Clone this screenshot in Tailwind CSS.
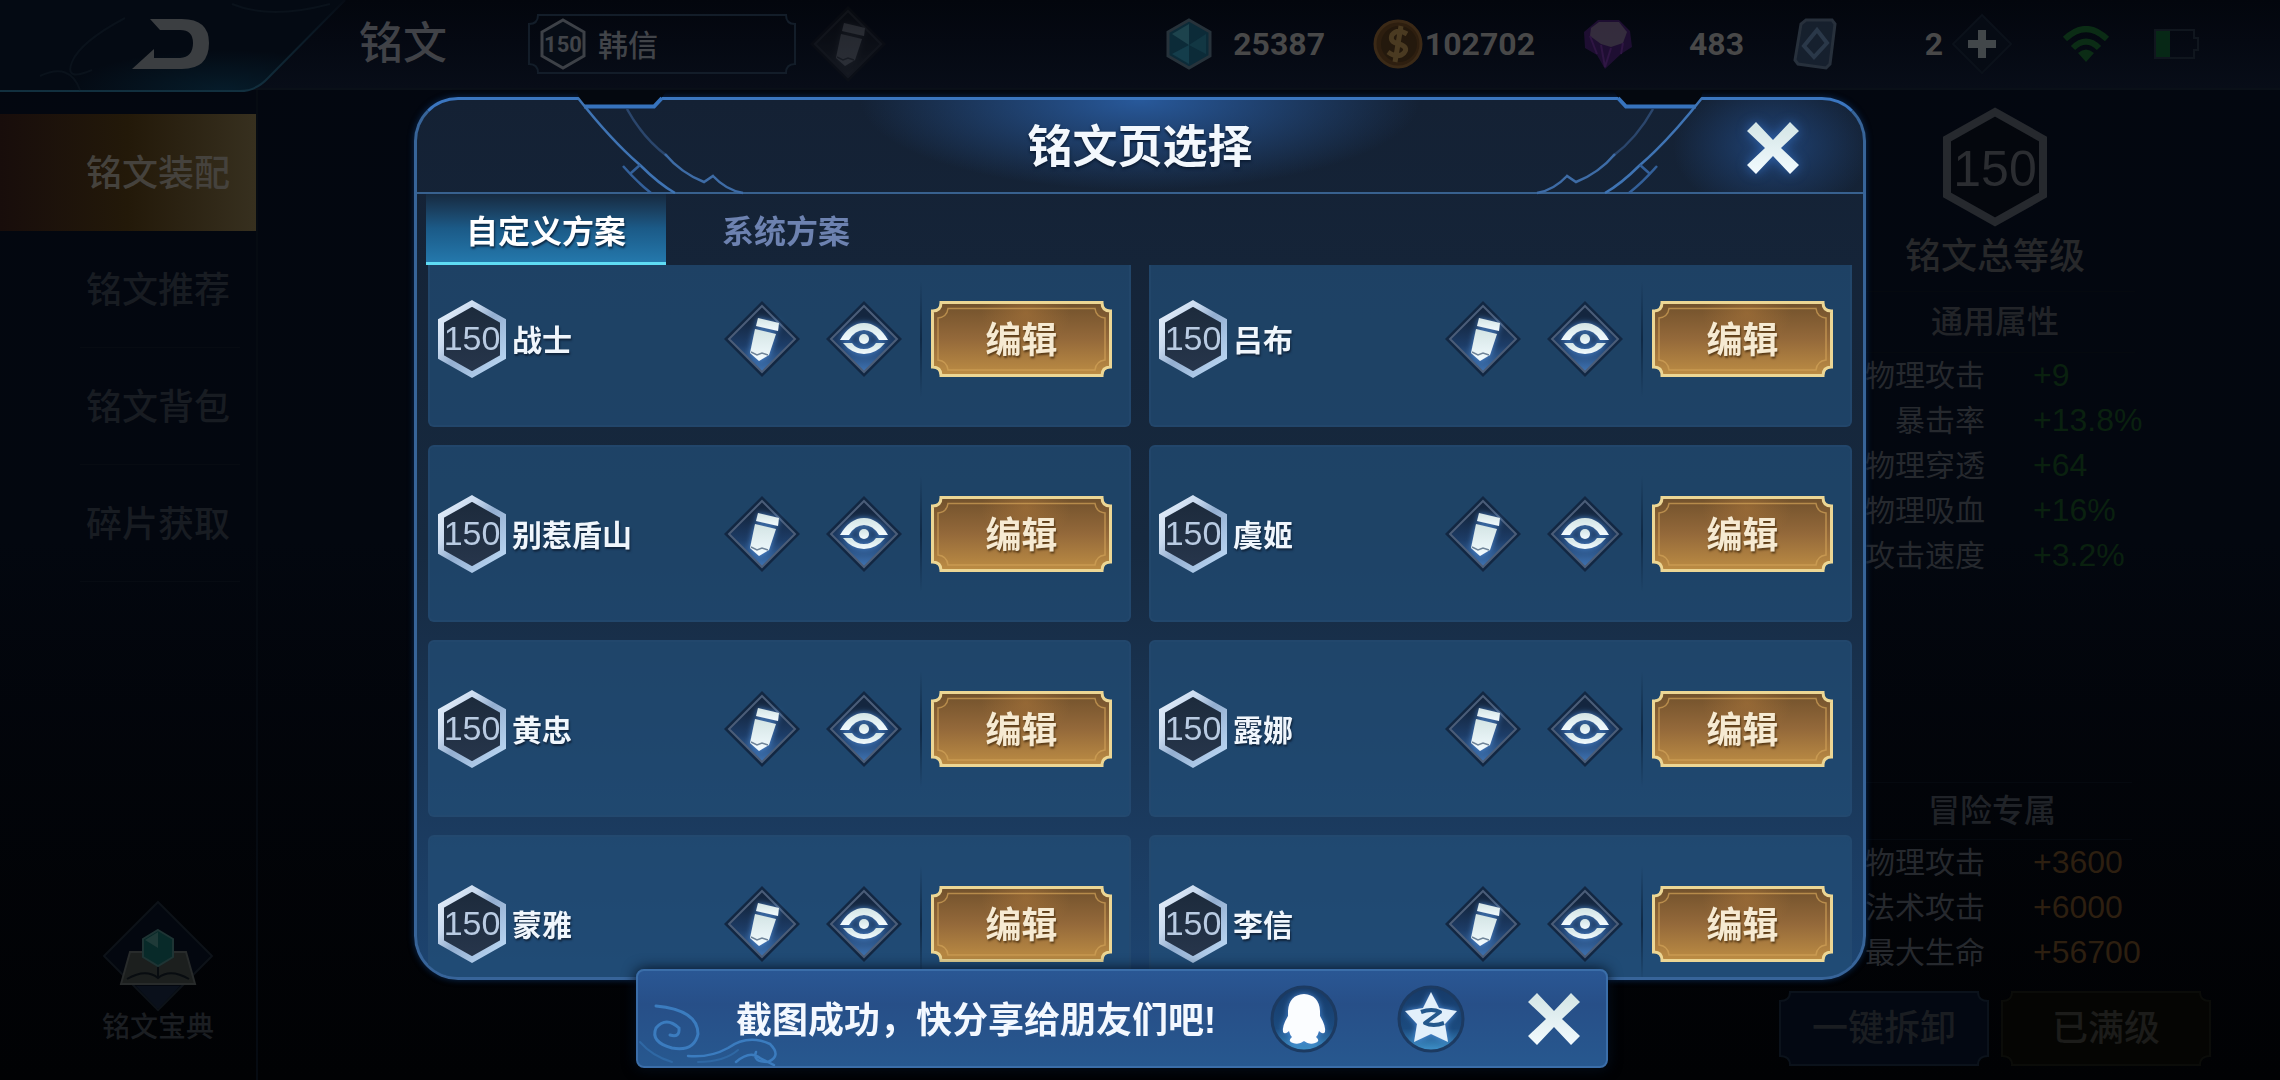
<!DOCTYPE html>
<html lang="zh-CN">
<head>
    <meta charset="UTF-8">
    <meta name="viewport" content="width=device-width, initial-scale=1.0">
    <title>铭文页选择</title>
    <script src="https://cdn.jsdelivr.net/npm/@tailwindcss/browser@4"></script>
</head>
<body class="bg-[#02060c] font-['Liberation_Sans','Noto_Sans_CJK_SC',sans-serif]">
    <!-- Shared icons -->
    <svg class="absolute w-0 h-0" aria-hidden="true">
        <defs>
            <linearGradient id="hexStroke" x1="0" y1="0" x2="1" y2="1">
                <stop offset="0" stop-color="#e8f1fb"/>
                <stop offset="0.3" stop-color="#c9daef"/>
                <stop offset="0.5" stop-color="#93aed0"/>
                <stop offset="1" stop-color="#bfdcf8"/>
            </linearGradient>
            <linearGradient id="hexFill" x1="0" y1="0" x2="0" y2="1">
                <stop offset="0" stop-color="#1c2a3b"/>
                <stop offset="1" stop-color="#27364c"/>
            </linearGradient>
            <linearGradient id="diamondFill" x1="0" y1="0" x2="0" y2="1">
                <stop offset="0.2" stop-color="#14263f"/>
                <stop offset="0.6" stop-color="#1d3d68"/>
                <stop offset="1" stop-color="#3f74b4"/>
            </linearGradient>
            <linearGradient id="iconFill" x1="0" y1="0" x2="0" y2="1">
                <stop offset="0" stop-color="#d3e4e4"/>
                <stop offset="1" stop-color="#f2fbff"/>
            </linearGradient>
            <linearGradient id="goldFill" x1="0" y1="0" x2="0" y2="1">
                <stop offset="0" stop-color="#71512c"/>
                <stop offset="0.5" stop-color="#94693a"/>
                <stop offset="1" stop-color="#bd8d44"/>
            </linearGradient>
            <linearGradient id="circleFill" x1="0" y1="0" x2="0" y2="1">
                <stop offset="0" stop-color="#163a68"/>
                <stop offset="0.65" stop-color="#1b4a7e"/>
                <stop offset="1" stop-color="#3f93cb"/>
            </linearGradient>
            <radialGradient id="goldGlow" cx="0.5" cy="0.5" r="0.5">
                <stop offset="0" stop-color="#b57c3c" stop-opacity="0.45"/>
                <stop offset="1" stop-color="#b57c3c" stop-opacity="0"/>
            </radialGradient>
            <filter id="glow" x="-50%" y="-50%" width="200%" height="200%">
                <feDropShadow dx="0" dy="0" stdDeviation="3" flood-color="#5fa8ff" flood-opacity="0.7"/>
            </filter>
        </defs>
        <symbol id="hexagon" viewBox="0 0 68 78">
            <path d="M34 3.5 65 21V57L34 74.5 3 57V21Z" fill="url(#hexFill)" stroke="url(#hexStroke)" stroke-width="6"/>
        </symbol>
        <symbol id="pencil" viewBox="0 0 76 76">
            <path d="M38 0 76 38 38 76 0 38Z" fill="#122742"/>
            <path d="M38 5 71 38 38 71 5 38Z" fill="url(#diamondFill)" stroke="#4b5d78" stroke-width="2"/>
            <g filter="url(#glow)" fill="url(#iconFill)">
                <path d="M34 17 55 22 54 30 32 25Z"/>
                <path d="M31 28 52 33 45 54 35 60 26 52Z"/>
            </g>
            <path d="M27 51 33 54 38 52 44 54" fill="none" stroke="#6f8499" stroke-width="1.5"/>
        </symbol>
        <symbol id="eye" viewBox="0 0 76 76">
            <path d="M38 0 76 38 38 76 0 38Z" fill="#122742"/>
            <path d="M38 5 71 38 38 71 5 38Z" fill="url(#diamondFill)" stroke="#4b5d78" stroke-width="2"/>
            <g filter="url(#glow)" fill="url(#iconFill)">
                <path d="M14 39Q24 22 38 22T62 39H53Q47 29 38 29T23 39Z"/>
                <path d="M17 42H26Q30 48 38 48T50 42H59Q50 53 38 53T17 42Z"/>
                <circle cx="38" cy="38" r="5"/>
            </g>
        </symbol>
        <symbol id="goldFrame" viewBox="0 0 181 76">
            <path d="M10 1.5H171Q171 10 179.5 10V66Q171 66 171 74.5H10Q10 66 1.5 66V10Q10 10 10 1.5Z" fill="url(#goldFill)"/>
            <ellipse cx="95" cy="12" rx="45" ry="34" fill="url(#goldGlow)"/>
            <path d="M17 7.500H164Q165 16 174 17V59Q165 60 164 69H17Q16 60 7 59V17Q16 16 17 7.500Z" fill="none" stroke="#d2a258" stroke-opacity="0.7" stroke-width="1.500"/>
            <path d="M10 1.5H171Q171 10 179.5 10V66Q171 66 171 74.5H10Q10 66 1.5 66V10Q10 10 10 1.5Z" fill="none" stroke="#ecd694" stroke-width="3"/>
        </symbol>
        <symbol id="cross" viewBox="0 0 52 52">
            <path d="M9 0 26 18 43 0 52 9 34 26 52 43 43 52 26 34 9 52 0 43 18 26 0 9Z" fill="url(#iconFill)"/>
        </symbol>
        <symbol id="headerCorner" viewBox="560 90 200 106">
            <path d="M578 90H668L661 100 655 108H587L580 98Z" fill="#04080f"/>
            <path d="M585 106.500H655L663 98" fill="none" stroke="#3773bd" stroke-width="4"/>
            <path d="M579 98Q612 140 641 165Q660 184 676 193" fill="none" stroke="#3f74b4" stroke-width="2.500"/>
            <path d="M641 165 632 173M624 166Q638 182 652 193" fill="none" stroke="#33609a" stroke-width="2.500"/>
            <path d="M628 109Q644 138 668 156" fill="none" stroke="#2b466c" stroke-width="2.500"/>
            <path d="M666 154Q682 173 705 182L714 176Q727 190 744 193" fill="none" stroke="#3e6ca6" stroke-width="2.500"/>
        </symbol>
    </svg>

    <div class="flex flex-col min-h-screen bg-linear-to-b from-[#030710] via-[#03070f] to-[#010204] text-[#2a2d33]">
        <!-- Top bar -->
        <header class="relative flex items-center h-[90px] border-b-2 border-[#0a1018] bg-linear-to-b from-[#03060d] to-[#080d18]">
            <svg class="absolute left-0 top-0 w-[360px] h-[92px]" viewBox="0 0 360 92" fill="none" aria-hidden="true">
                <defs>
                    <radialGradient id="backGlow" cx="0.65" cy="1" r="0.45">
                        <stop offset="0" stop-color="#061c2a"/>
                        <stop offset="1" stop-color="#040a13"/>
                    </radialGradient>
                    <linearGradient id="backEdge" x1="0" y1="1" x2="0" y2="0">
                        <stop offset="0" stop-color="#12303f"/>
                        <stop offset="1" stop-color="#060b14"/>
                    </linearGradient>
                </defs>
                <path d="M0 0H345L268 78Q256 91 240 91H0Z" fill="url(#backGlow)"/>
                <path d="M345 0 268 78Q256 91 240 91H0" stroke="url(#backEdge)" stroke-width="2"/>
                <path d="M125 18Q80 42 72 62T92 70M40 76Q70 62 80 90M232 4Q270 20 330 4" stroke="#0a121b" stroke-width="2"/>
            </svg>
            <button class="relative ml-[130px] w-20 h-[52px]" aria-label="返回">
                <svg class="w-20 h-[52px]" viewBox="0 0 80 52" aria-hidden="true"><path d="M20 1H52Q79 1 79 25 79 51 52 51H2L24 31V40H50Q63 39 63 25 63 12 50 12H30Z" fill="#3b3e41"/></svg>
            </button>
            <h1 class="ml-[149px] text-[44px] leading-[52px] font-medium text-[#404247]">铭文</h1>
            <button class="relative flex items-center ml-[81px] w-[268px] h-[60px] pl-3 text-[#414449]">
                <svg class="absolute inset-0 w-full h-full" viewBox="0 0 268 60" fill="none" stroke="#131d29" stroke-width="2" aria-hidden="true"><path d="M10 1H258Q258 10 267 10V50Q258 50 258 59H10Q10 50 1 50V10Q10 10 10 1Z"/></svg>
                <span class="relative flex items-center justify-center w-[46px] h-[52px]">
                    <svg class="absolute inset-0 w-full h-full" viewBox="0 0 46 52" fill="#070d16" stroke="#3d4147" stroke-width="3" aria-hidden="true"><path d="M23 2 44 14V38L23 50 2 38V14Z"/></svg>
                    <span class="relative font-['Roboto'] font-bold text-[22px]">150</span>
                </span>
                <span class="relative ml-3 pt-1 text-[30px] leading-9 font-medium">韩信</span>
            </button>
            <button class="ml-[14px] w-[76px] h-[76px] opacity-20 brightness-75 grayscale" aria-label="重命名"><svg class="w-full h-full" aria-hidden="true"><use href="#pencil"/></svg></button>

            <div class="flex items-center ml-auto font-['Roboto'] font-bold text-[32px] leading-10 text-[#484848]">
                <svg class="w-12 h-[52px] opacity-80" viewBox="0 0 48 52" aria-hidden="true">
                    <path d="M24 2 45 14V38L24 50 3 38V14Z" fill="#0e3442" stroke="#303d45" stroke-width="3"/>
                    <path d="M24 6V27L7 16Z" fill="#24525c"/><path d="M24 27 41 16V36Z" fill="#164350"/><path d="M24 27V46L7 36Z" fill="#184a59"/>
                </svg>
                <span class="w-[112px] text-right">25387</span>
                <svg class="ml-[48px] w-[50px] h-[50px] opacity-80" viewBox="0 0 50 50" aria-hidden="true">
                    <circle cx="25" cy="25" r="23" fill="#38240f" stroke="#493218" stroke-width="3"/>
                    <circle cx="26" cy="25" r="18" fill="#2c1d0c"/>
                    <path d="M34 15Q24 9 19 16 16 23 26 25 36 28 31 34 25 40 15 33M28 7 22 43" fill="none" stroke="#5c4725" stroke-width="5"/>
                </svg>
                <span class="w-[112px] text-right">102702</span>
                <svg class="ml-[46px] w-[52px] h-[52px] opacity-80" viewBox="0 0 52 52" aria-hidden="true">
                    <path d="M3 14 17 2H38L49 13 51 29 40 36 24 51 16 37 4 30Z" fill="#25103a"/>
                    <path d="M10 10 18 4H38L46 14 42 25 30 29 20 26 9 18Z" fill="#403648"/>
                    <path d="M20 27 24 49 30 30M9 18 16 36M42 25 40 36" fill="none" stroke="#3a1950" stroke-width="2"/>
                </svg>
                <span class="w-[111px] text-right">483</span>
                <svg class="ml-[49px] w-11 h-[52px] opacity-80" viewBox="0 0 44 52" aria-hidden="true">
                    <path d="M13 2H39L42 6 37 46 33 50 5 46 2 42 8 6Z" fill="#1b2635" stroke="#303a46" stroke-width="3"/>
                    <path d="M24 12 34 25 21 39 11 28Z" fill="none" stroke="#344457" stroke-width="4"/>
                </svg>
                <span class="w-[106px] text-right">2</span>
                <button class="ml-2 w-[62px] h-[62px]" aria-label="增加">
                    <svg class="w-full h-full" viewBox="0 0 62 62" aria-hidden="true"><path d="M31 2 60 31 31 60 2 31Z" fill="#060b14" stroke="#0b111a" stroke-width="2"/><path d="M27 17H35V27H45V35H35V45H27V35H17V27H27Z" fill="#42474a"/></svg>
                </button>
                <svg class="ml-[49px] w-12 h-9" viewBox="0 0 48 36" fill="none" stroke="#0b2c15" stroke-width="6" aria-hidden="true"><path d="M3 13Q24-7 45 13M11 22Q24 9 37 22"/><path d="M24 36 16 27Q24 20 32 27Z" fill="#0b2c15" stroke="none"/></svg>
                <svg class="ml-[43px] mr-[81px] w-[46px] h-[32px]" viewBox="0 0 46 32" aria-hidden="true"><path d="M2 2H41V10H45V22H41V30H2Z" fill="none" stroke="#10161e" stroke-width="2"/><path d="M3 3H17V29H3Z" fill="#072816"/></svg>
            </div>
        </header>

        <div class="flex flex-1 justify-between">
            <!-- Side navigation -->
            <nav class="flex flex-col w-[258px] pt-6 border-r-2 border-[#060b12] text-[36px] font-medium text-[#181c22]">
                <a href="#" class="h-[117px] leading-[120px] pl-[86px] text-[#45423d] bg-linear-to-r from-[#180d0b] via-[#231909] to-[#37301f]">铭文装配</a>
                <a href="#" class="h-[117px] leading-[120px] pl-[86px]">铭文推荐</a>
                <hr class="-mt-px ml-20 w-40 border-[#070b12]">
                <a href="#" class="h-[117px] leading-[120px] pl-[86px]">铭文背包</a>
                <hr class="-mt-px ml-20 w-40 border-[#070b12]">
                <a href="#" class="h-[117px] leading-[120px] pl-[86px]">碎片获取</a>
                <hr class="-mt-px ml-20 w-40 border-[#070b12]">
                <a href="#" class="flex flex-col items-center mt-auto mb-8 ml-[60px] text-[28px] leading-10 text-[#1b1e22]">
                    <svg class="-mb-1 w-28 h-28" viewBox="0 0 112 112" aria-hidden="true">
                        <path d="M56 2 110 56 56 110 2 56Z" fill="#03070f" stroke="#0d1218" stroke-width="2"/>
                        <path d="M34 86H78L56 109Z" fill="#0a101b"/>
                        <path d="M28 52H84L93 84H19Z" fill="#1c1f1e" stroke="#282b2b" stroke-width="2"/>
                        <path d="M25 79Q44 68 56 78 68 68 87 79M56 60V78" fill="none" stroke="#080c10" stroke-width="2"/>
                        <path d="M56 30 71 39V57L56 66 41 57V39Z" fill="#082a29" stroke="#1e3434" stroke-width="2"/>
                        <path d="M56 32V48L43 40Z" fill="#1f3a38"/>
                    </svg>
                    铭文宝典
                </a>
            </nav>

            <!-- Attribute totals -->
            <aside class="flex flex-col w-[570px] pt-[17px] pb-[14px] pr-[69px]">
                <div class="flex flex-col items-center w-[570px]">
                    <div class="relative flex items-center justify-center w-[106px] h-[120px]">
                        <svg class="absolute inset-0 w-full h-full" viewBox="0 0 106 120" fill="#04070d" stroke="#26292e" stroke-width="8" aria-hidden="true"><path d="M53 5 101 32V88L53 115 5 88V32Z"/></svg>
                        <span class="relative pt-1 text-[50px] text-[#2b2d31]">150</span>
                    </div>
                    <h2 class="mt-1 text-[36px] leading-[52px] font-medium text-[#27282a]">铭文总等级</h2>
                    <h3 class="mt-2 w-[280px] border-y border-[#05090f] text-center text-[32px] leading-[60px] font-medium text-[#222428]">通用属性</h3>
                </div>
                <table class="ml-[119px] text-[30px] leading-[45px] text-[#26292e]">
                    <tbody>
                        <tr><th scope="row" class="w-[156px] font-normal text-right">物理攻击</th><td class="pl-12 text-[32px] text-[#0a210f]">+9</td></tr>
                        <tr><th scope="row" class="font-normal text-right">暴击率</th><td class="pl-12 text-[32px] text-[#0a210f]">+13.8%</td></tr>
                        <tr><th scope="row" class="font-normal text-right">物理穿透</th><td class="pl-12 text-[32px] text-[#0a210f]">+64</td></tr>
                        <tr><th scope="row" class="font-normal text-right">物理吸血</th><td class="pl-12 text-[32px] text-[#0a210f]">+16%</td></tr>
                        <tr><th scope="row" class="font-normal text-right">攻击速度</th><td class="pl-12 text-[32px] text-[#0a210f]">+3.2%</td></tr>
                    </tbody>
                </table>
                <h3 class="mt-auto ml-[142px] w-[280px] border-y border-[#05090f] text-center text-[32px] leading-[56px] font-medium text-[#202328]">冒险专属</h3>
                <table class="ml-[119px] text-[30px] leading-[45px] text-[#26292e]">
                    <tbody>
                        <tr><th scope="row" class="w-[156px] font-normal text-right">物理攻击</th><td class="pl-12 text-[32px] text-[#2d1f10]">+3600</td></tr>
                        <tr><th scope="row" class="font-normal text-right">法术攻击</th><td class="pl-12 text-[32px] text-[#2d1f10]">+6000</td></tr>
                        <tr><th scope="row" class="font-normal text-right">最大生命</th><td class="pl-12 text-[32px] text-[#2d1f10]">+56700</td></tr>
                    </tbody>
                </table>
                <div class="flex justify-end gap-3 mt-4 text-[36px] font-medium text-[#1a1d21]">
                    <button class="relative w-[210px] h-[75px]">
                        <svg class="absolute inset-0 w-full h-full" viewBox="0 0 210 75" fill="#030812" stroke="#0b121b" stroke-width="2" aria-hidden="true"><path d="M11 1H199Q199 10 209 10V65Q199 65 199 74H11Q11 65 1 65V10Q11 10 11 1Z"/></svg>
                        <span class="relative">一键拆卸</span>
                    </button>
                    <button class="relative w-[210px] h-[75px] text-[#1c1c1a]">
                        <svg class="absolute inset-0 w-full h-full" viewBox="0 0 210 75" fill="#050503" stroke="#0b0c09" stroke-width="2" aria-hidden="true"><path d="M11 1H199Q199 10 209 10V65Q199 65 199 74H11Q11 65 1 65V10Q11 10 11 1Z"/></svg>
                        <span class="relative">已满级</span>
                    </button>
                </div>
            </aside>
        </div>
    </div>

    <!-- Page picker dialog -->
    <div class="fixed inset-0 flex justify-center pt-[97px] pb-[100px]">
        <section role="dialog" aria-labelledby="pickerTitle" class="relative flex flex-col w-full max-w-[1452px] rounded-[44px] border-3 border-[#376499] border-t-[#3b76c0] bg-linear-to-b from-[#142134] via-[#16293f] to-[#1d4470] shadow-[0_0_6px_#0a2a55]">
            <svg class="absolute left-[142px] -top-[10px] w-[200px] h-[106px]" aria-hidden="true"><use href="#headerCorner"/></svg>
            <svg class="absolute right-[142px] -top-[10px] w-[200px] h-[106px] -scale-x-100" aria-hidden="true"><use href="#headerCorner"/></svg>
            <div class="flex items-center justify-center h-[94px] shrink-0 border-b-2 border-[#38618f] rounded-t-[40px] bg-[radial-gradient(ellipse_280px_90px_at_50%_0,#28599b,transparent),radial-gradient(ellipse_100px_70px_at_calc(100%_-_90px)_50%,#1f4274,transparent)]">
                <h2 id="pickerTitle" class="pt-1 text-[45px] leading-[52px] font-bold text-[#f3f8fd] [text-shadow:0_2px_3px_#0a1a30]">铭文页选择</h2>
                <button class="absolute right-[64px] top-[22px] w-[52px] h-[52px] drop-shadow-[0_0_6px_#2f62ab]" aria-label="关闭"><svg class="w-full h-full" aria-hidden="true"><use href="#cross"/></svg></button>
            </div>
            <div role="tablist" class="flex h-[71px] shrink-0 px-[9px] text-[32px]">
                <button role="tab" aria-selected="true" class="w-[240px] border-b-3 border-[#5fdcf5] bg-linear-to-b from-[#162a40] via-[#1b5a87] to-[#2478ac] font-bold text-white pt-2 [text-shadow:1px_2px_2px_#0d2a45]">自定义方案</button>
                <button role="tab" aria-selected="false" class="w-[240px] pt-[5px] font-bold text-[#6d82b0]">系统方案</button>
            </div>
            <div class="flex-1 min-h-0 overflow-hidden rounded-b-[40px]">
                <ul id="pageList" class="grid grid-cols-2 gap-[18px] px-[11px] -mt-[15px]"></ul>
            </div>
        </section>
    </div>

    <!-- Share toast -->
    <div class="fixed inset-x-0 bottom-3 flex justify-center">
        <div role="status" class="relative flex items-center w-[972px] h-[99px] pl-[98px] mr-9 rounded-lg border-2 border-[#3b6ea9] bg-linear-to-b from-[#2a5794] via-[#274f88] via-35% to-[#27588f] shadow-[0_0_14px_#051020]">
            <svg class="absolute left-0 bottom-0 w-[150px] h-[66px]" viewBox="0 0 150 66" fill="none" stroke="#3b7cbf" stroke-width="3" stroke-linecap="round" aria-hidden="true">
                <path d="M18 6Q60 10 60 34 56 52 34 48 12 42 18 28 28 16 41 28 42 38 32 35"/>
                <path d="M50 56Q72 58 90 48 110 34 132 44 144 56 130 62 114 62 118 52M98 62Q112 50 122 58L136 65" stroke-width="2.500"/>
                <path d="M2 42Q14 56 34 62M60 62Q86 62 100 50" stroke="#2f68a4" stroke-width="2"/>
            </svg>
            <p class="relative pt-1 text-[36px] leading-[48px] font-bold text-[#f3f8ff] whitespace-nowrap">截图成功，快分享给朋友们吧!</p>
            <button class="absolute right-[268px] w-[68px] h-[68px]" aria-label="分享到QQ">
                <svg class="w-full h-full" viewBox="0 0 68 68" aria-hidden="true">
                    <circle cx="34" cy="34" r="32" fill="url(#circleFill)" stroke="#1c3a61" stroke-width="3"/>
                    <path d="M34 9Q49 10 50 26V31Q56 41 55 47 53 50 49 46 48 50 46 52 51 56 45 58 39 60 34 56 29 60 23 58 17 56 22 52 20 50 19 46 15 50 13 47 12 41 18 31V26Q19 10 34 9Z" fill="#fbfdff" filter="url(#glow)"/>
                </svg>
            </button>
            <button class="absolute right-[141px] w-[68px] h-[68px]" aria-label="分享到QQ空间">
                <svg class="w-full h-full" viewBox="0 0 68 68" aria-hidden="true">
                    <circle cx="34" cy="34" r="32" fill="url(#circleFill)" stroke="#1c3a61" stroke-width="3"/>
                    <path d="M34 7 42 23 60 26 48 39 51 57 34 49 17 57 20 39 8 26 26 23Z" fill="#e2f0fb" filter="url(#glow)"/>
                    <path d="M24 27Q35 23 43 27L28 38Q36 42 47 38" fill="none" stroke="#24588c" stroke-width="4" stroke-linejoin="round"/>
                </svg>
            </button>
            <button class="absolute right-[26px] w-[52px] h-[52px]" aria-label="关闭提示"><svg class="w-full h-full" aria-hidden="true"><use href="#cross"/></svg></button>
        </div>
    </div>

    <script>
        // Saved rune pages, in display order
        const pages = ['战士', '吕布', '别惹盾山', '虞姬', '黄忠', '露娜', '蒙雅', '李信'];

        document.getElementById('pageList').innerHTML = pages.map(name => `
            <li class="flex items-center h-[177px] pl-2 pr-[17px] rounded-md border-2 border-[#264a70]/60 bg-[#224f78]/70">
                <span class="relative flex items-center justify-center w-[68px] h-[78px]">
                    <svg class="absolute inset-0 w-full h-full" aria-hidden="true"><use href="#hexagon"/></svg>
                    <span class="relative text-[34px] text-[#b9cbe2]">150</span>
                </span>
                <span class="ml-[6px] pt-1 text-[30px] leading-9 font-bold text-[#f0f6fc] [text-shadow:1px_2px_2px_#10243c]">${name}</span>
                <button class="ml-auto w-[76px] h-[76px]" aria-label="重命名 ${name}"><svg class="w-full h-full" aria-hidden="true"><use href="#pencil"/></svg></button>
                <button class="ml-[26px] w-[76px] h-[76px]" aria-label="查看 ${name}"><svg class="w-full h-full" aria-hidden="true"><use href="#eye"/></svg></button>
                <span class="ml-[18px] w-[2px] h-[116px] bg-linear-to-b from-transparent via-[#0f2945] to-transparent"></span>
                <button class="relative ml-[9px] w-[181px] h-[76px] pt-1 text-[36px] font-bold text-[#f6ead2]">
                    <svg class="absolute inset-0 w-full h-full" aria-hidden="true"><use href="#goldFrame"/></svg>
                    <span class="relative [text-shadow:1px_2px_2px_#5a3c18]">编辑</span>
                </button>
            </li>
        `).join('');
    </script>
</body>
</html>
